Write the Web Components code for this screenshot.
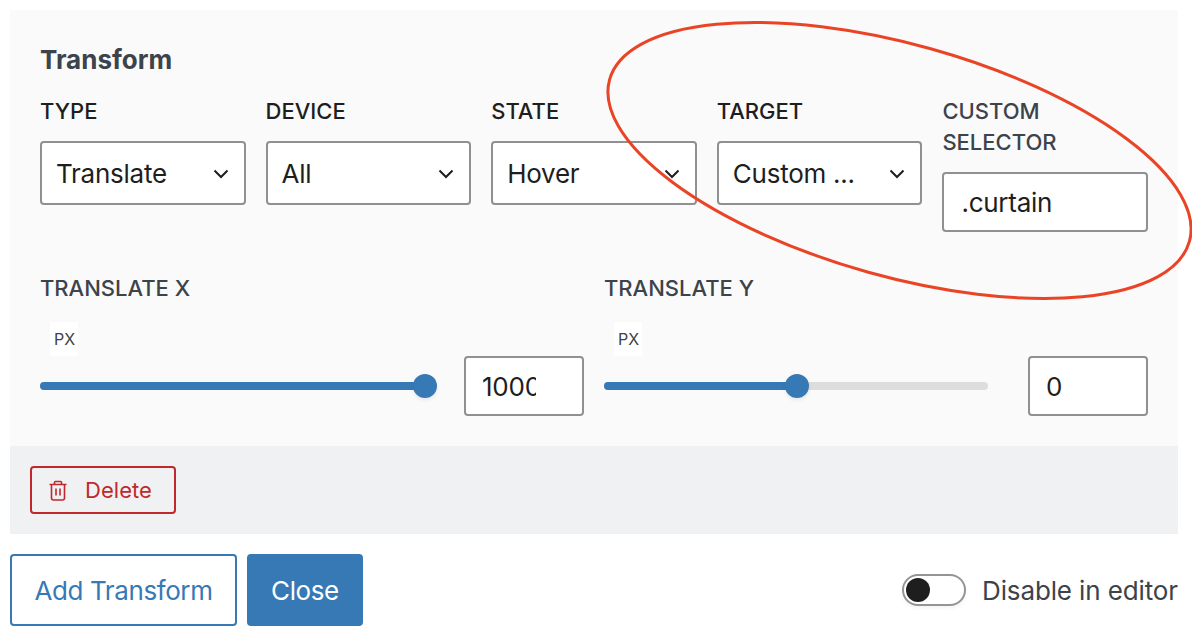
<!DOCTYPE html>
<html>
<head>
<meta charset="utf-8">
<style>
  html, body { margin: 0; background: #fff; }
  body { font-family: Inter, "Liberation Sans", sans-serif; color: #1e1e1e; }
</style>
</head>
<body>
<transform-app></transform-app>

<script>
// little helper so every element below stays short
function shadow(el, html) {
  el.attachShadow({ mode: "open" }).innerHTML = html;
}

class FieldLabel extends HTMLElement {
  connectedCallback() {
    shadow(this, `<style>
      :host { display: block; font-size: 22px; line-height: 31px; font-weight: 500;
        text-transform: uppercase; color: var(--label-color, #1e1e1e); margin-bottom: var(--label-gap, 14px); }
    </style><slot></slot>`);
  }
}

class SelectBox extends HTMLElement {
  connectedCallback() {
    shadow(this, `<style>
      :host { display: flex; align-items: center; justify-content: space-between; box-sizing: border-box;
        height: 64px; padding: 1px 15px 0 14px; background: #fff; border: 2px solid #8f9092; border-radius: 4px;
        font-size: 26px; letter-spacing: -.25px; color: #1e1e1e; }
      svg { width: 16px; height: 10px; display: block; }
    </style><slot></slot>
    <svg viewBox="0 0 16 10"><path d="M1.5 1.5 8 8l6.5-6.5" fill="none" stroke="#1e1e1e" stroke-width="2"/></svg>`);
  }
}

class TextBox extends HTMLElement {
  connectedCallback() {
    shadow(this, `<style>
      :host { display: flex; align-items: center; box-sizing: border-box; height: 60px; flex: none;
        padding: 1px 0 0 16px; background: #fff; border: 2px solid #8f9092; border-radius: 4px;
        font-size: 26px; letter-spacing: -.25px; color: #1e1e1e; }
      span { display: block; overflow: hidden; white-space: nowrap; max-width: 54px; }
      :host([wide]) { padding-left: 17px; }
      :host([wide]) span { max-width: none; }
    </style><span><slot></slot></span>`);
  }
}

class RangeField extends HTMLElement {
  connectedCallback() {
    const pct = this.getAttribute("value") || 0;
    shadow(this, `<style>
      :host { display: block; --label-color: #3c434a; --label-gap: 18px; }
      .unit { display: block; box-sizing: border-box; width: 28px; height: 34px; margin-left: 10px; padding-left: 1px; background: #fff;
        font-size: 16px; line-height: 34px; text-align: center; color: #3c434a; }
      .row { display: flex; align-items: center; gap: 40px; }
      .track { position: relative; flex: 1; height: 8px; border-radius: 4px; background: #ddd; }
      .fill { height: 100%; border-radius: 4px; background: #3779b5; width: ${pct}%; }
      .thumb { position: absolute; left: ${pct}%; top: 50%; width: 24px; height: 24px; margin: -12px 0 0 -12px;
        border-radius: 50%; background: #3779b5; box-shadow: 0 2px 4px rgba(0,0,0,.08); }
      text-box { width: 120px; }
    </style>
    <field-label><slot name="label"></slot></field-label>
    <span class="unit">PX</span>
    <div class="row">
      <div class="track"><div class="fill"></div><div class="thumb"></div></div>
      <text-box><slot name="number"></slot></text-box>
    </div>`);
  }
}

class ActionButton extends HTMLElement {
  connectedCallback() {
    shadow(this, `<style>
      :host { display: inline-flex; align-items: center; justify-content: center; box-sizing: border-box;
        height: 72px; border: 2px solid #3779b5; border-radius: 4px;
        background: #fff; color: #3779b5; font-size: 26px; letter-spacing: -.4px; }
      :host([primary]) { background: #3779b5; color: #fff; }
      :host([danger]) { height: 48px; padding: 0 22px 0 17px; gap: 18px; border-color: #c0282d; color: #c0282d; background: transparent;
        font-size: 22px; letter-spacing: .05px; }
    </style><slot></slot>`);
  }
}

class ToggleSwitch extends HTMLElement {
  connectedCallback() {
    shadow(this, `<style>
      :host { display: flex; align-items: center; gap: 16px; font-size: 26px; letter-spacing: -.12px; color: #3c434a; }
      .sw { box-sizing: border-box; width: 64px; height: 32px; border: 2px solid #949494; border-radius: 16px;
        background: #fff; padding: 2px; box-shadow: 0 2px 4px rgba(0,0,0,.05); }
      .knob { width: 24px; height: 24px; border-radius: 50%; background: #1e1e1e; }
    </style><div class="sw"><div class="knob"></div></div><span><slot></slot></span>`);
  }
}

class TransformPanel extends HTMLElement {
  connectedCallback() {
    shadow(this, `<style>
      :host { display: block; background: #fafafa; }
      .body { padding: 33px 30px 30px 30px; }
      h2 { margin: 0 0 19px 0; font-size: 26px; line-height: 34px; font-weight: 700; color: #3c434a; }
      .top { display: grid; grid-template-columns: repeat(5, 1fr); gap: 20px; align-items: start; }
      .bottom { display: grid; grid-template-columns: 1fr 1fr; gap: 20px; margin-top: 41px; }
      .foot { display: flex; align-items: center; height: 88px; padding-left: 20px; background: #f0f1f3; }
      .custom { --label-color: #3c434a; }
    </style>
    <div class="body">
      <h2>Transform</h2>
      <div class="top">
        <div><field-label>Type</field-label><select-box>Translate</select-box></div>
        <div><field-label>Device</field-label><select-box>All</select-box></div>
        <div><field-label>State</field-label><select-box>Hover</select-box></div>
        <div><field-label>Target</field-label><select-box>Custom ...</select-box></div>
        <div class="custom"><field-label>Custom Selector</field-label><text-box wide>.curtain</text-box></div>
      </div>
      <div class="bottom">
        <range-field value="100.25"><span slot="label">Translate X</span><span slot="number">1000</span></range-field>
        <range-field value="50.25"><span slot="label">Translate Y</span><span slot="number">0</span></range-field>
      </div>
    </div>
    <div class="foot">
      <action-button danger>
        <svg width="18" height="21" viewBox="0 0 18 21" fill="none" stroke="#c0282d" stroke-width="1.6" stroke-linejoin="round">
          <path d="M0.5 4.5h17M5.5 4.5V2.5a1 1 0 0 1 1-1h5a1 1 0 0 1 1 1v2M2.5 4.5V18a2 2 0 0 0 2 2h9a2 2 0 0 0 2-2V4.5M7 8.5v7M11 8.5v7"/>
        </svg>
        Delete
      </action-button>
    </div>`);
  }
}

class TransformApp extends HTMLElement {
  connectedCallback() {
    shadow(this, `<style>
      :host { display: block; position: relative; box-sizing: border-box; width: 1192px; height: 634px;
        padding: 10px 14px 0 10px; overflow: hidden; }
      .actions { display: flex; align-items: center; gap: 10px; margin-top: 20px; }
      .add { width: 227px; }
      .close { width: 116px; }
      toggle-switch { margin-left: auto; }
      .mark { position: absolute; left: 0; top: 0; pointer-events: none; }
    </style>
    <transform-panel></transform-panel>
    <div class="actions">
      <action-button class="add">Add Transform</action-button>
      <action-button class="close" primary>Close</action-button>
      <toggle-switch>Disable in editor</toggle-switch>
    </div>
    <svg class="mark" width="1192" height="634" viewBox="0 0 1192 634">
      <ellipse cx="899.5" cy="160.5" rx="301" ry="116" transform="rotate(15.6 899.5 160.5)" fill="none" stroke="#ea4427" stroke-width="3"/>
    </svg>`);
  }
}

customElements.define("field-label", FieldLabel);
customElements.define("select-box", SelectBox);
customElements.define("text-box", TextBox);
customElements.define("range-field", RangeField);
customElements.define("action-button", ActionButton);
customElements.define("toggle-switch", ToggleSwitch);
customElements.define("transform-panel", TransformPanel);
customElements.define("transform-app", TransformApp);
</script>
</body>
</html>
